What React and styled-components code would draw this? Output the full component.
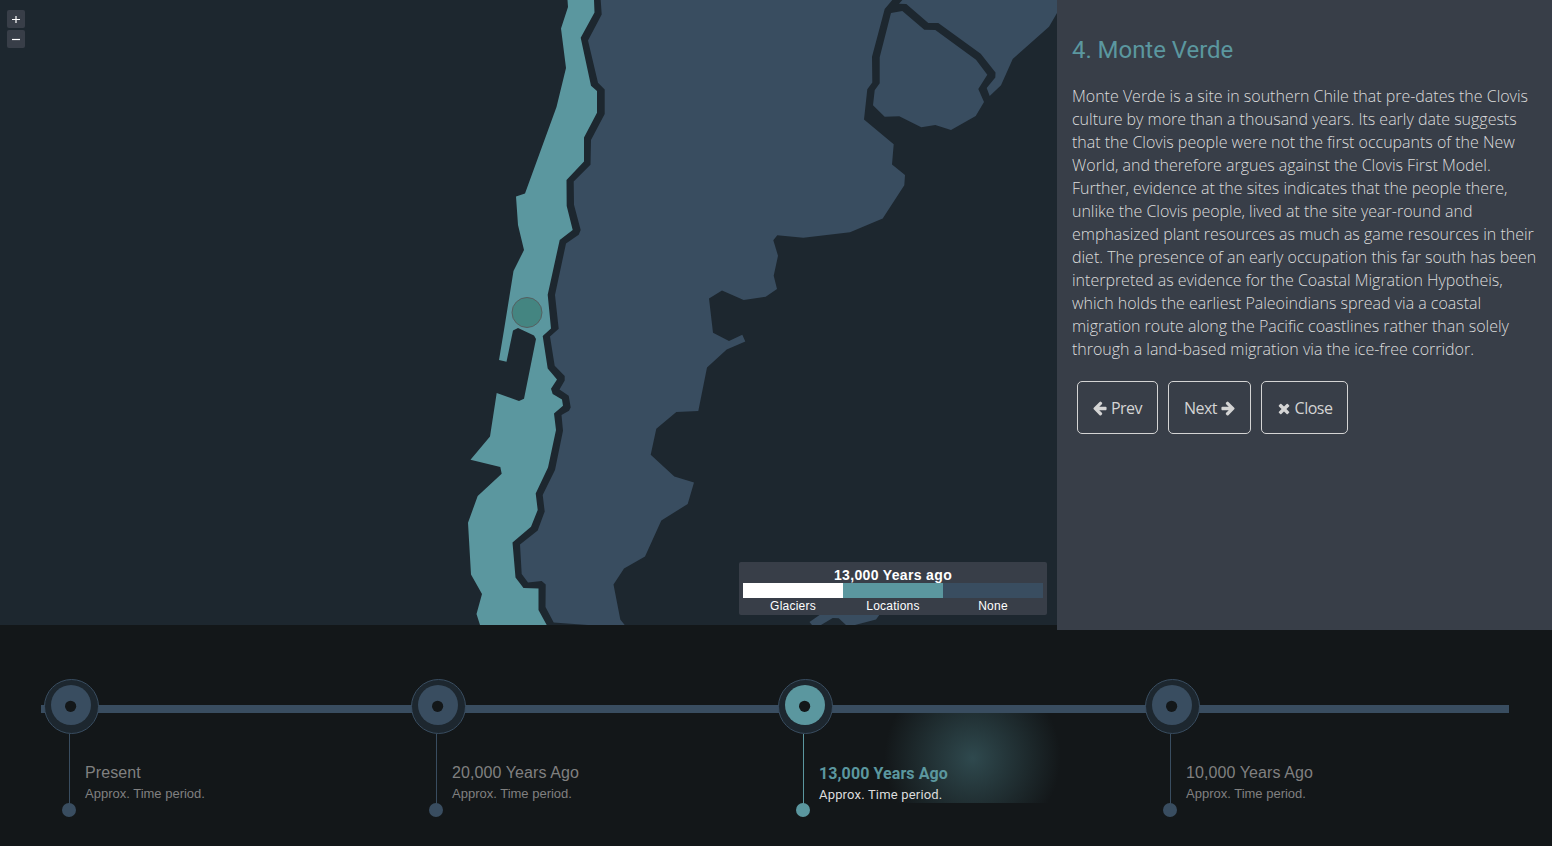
import React from "react";
import styled, { createGlobalStyle, css } from "styled-components";

const palette = {
  page: "#131719",
  sea: "#1d272f",
  panel: "#383e48",
  land: "#394d60",
  accent: "#5b979f",
};

const GlobalStyle = createGlobalStyle`
  * { box-sizing: border-box; }
  body { margin: 0; background: ${palette.page}; overflow: hidden; }
`;

const Page = styled.div`
  width: 1552px;
  height: 846px;
  background: ${palette.page};
`;

const Upper = styled.main`
  display: flex;
  align-items: flex-start;
  height: 630px;
`;

const MapArea = styled.section`
  position: relative;
  width: 1057px;
  height: 625px;
  background: ${palette.sea};
  overflow: hidden;
`;

const MapDrawing = styled.svg`
  display: block;
`;

const ZoomControls = styled.div`
  position: absolute;
  left: 7px;
  top: 10px;
  display: flex;
  flex-direction: column;
  gap: 2px;
`;

const ZoomButton = styled.button`
  display: grid;
  place-items: center;
  width: 18px;
  height: 18px;
  padding: 0;
  border: 0;
  border-radius: 2px;
  background: ${palette.panel};
  color: #fff;
`;

const Legend = styled.aside`
  position: absolute;
  right: 10px;
  bottom: 10px;
  width: 308px;
  height: 53px;
  padding: 5px 4px 0;
  border-radius: 2px;
  background: ${palette.panel};
  color: #fff;
  font-family: "Liberation Sans", sans-serif;
`;

const LegendTitle = styled.div`
  font-size: 14px;
  font-weight: 700;
  line-height: 16px;
  letter-spacing: 0.34px;
  text-align: center;
`;

const LegendKeys = styled.div`
  display: grid;
  grid-template-columns: repeat(3, 100px);
`;

const LegendKey = styled.div`
  border-top: 15px solid ${(p) => p.$color};
  font-size: 12px;
  line-height: 16px;
  letter-spacing: 0.22px;
  text-align: center;
`;

const InfoPanel = styled.section`
  width: 495px;
  height: 630px;
  padding: 35px 15px 0;
  background: ${palette.panel};
`;

const InfoTitle = styled.h1`
  margin: 0 0 20px;
  color: ${palette.accent};
  font: 400 24px/30px Roboto, sans-serif;
  letter-spacing: -0.05px;
`;

const InfoText = styled.p`
  margin: 0;
  color: #dcdcdc;
  font: 300 16px/23px "Open Sans", sans-serif;
  letter-spacing: -0.01px;
  white-space: nowrap;
`;

const Actions = styled.div`
  display: flex;
  gap: 10px;
  padding: 20px 5px 0;
`;

const ActionButton = styled.button`
  display: flex;
  align-items: center;
  justify-content: center;
  gap: 4px;
  width: ${(p) => p.$width}px;
  height: 53px;
  padding: 0;
  border: 1px solid #d4d4d4;
  border-radius: 5px;
  background: transparent;
  color: #d4d4d4;
  font: 400 16px/22px "Open Sans", sans-serif;
  letter-spacing: -0.5px;
`;

const ActionIcon = styled.svg`
  flex: none;
  margin-top: 2px;
  fill: currentColor;
  transform: ${(p) => (p.$flip ? "scaleX(-1)" : "none")};
`;

const Timeline = styled.section`
  position: relative;
  display: grid;
  grid-template-columns: repeat(4, 367px);
  width: 1468px;
  margin: 0 0 0 41px;
  padding-top: 49px;
  &::before {
    content: "";
    position: absolute;
    left: 0;
    top: 75px;
    width: 100%;
    height: 8px;
    background: ${palette.land};
  }
`;

const Period = styled.article`
  position: relative;
  padding-left: 3px;
  --mark: ${(p) => (p.$active ? palette.accent : palette.land)};
`;

const MarkerDrawing = styled.svg`
  display: block;
  position: relative;
`;

const Details = styled.div`
  position: relative;
  display: flex;
  height: 84px;
  padding-left: 18px;
`;

const Stem = styled.div`
  flex: none;
  display: flex;
  flex-direction: column;
  align-items: center;
  width: 14px;
  &::before {
    content: "";
    width: 1px;
    height: 70px;
    background: var(--mark);
  }
  &::after {
    content: "";
    width: 14px;
    height: 14px;
    margin-top: -1px;
    border-radius: 50%;
    background: var(--mark);
  }
`;

const Labels = styled.div`
  display: flex;
  flex-direction: column;
  padding: ${(p) => (p.$active ? "30px 0 0 9px" : "29px 0 0 9px")};
  color: #808080;
  white-space: nowrap;
  font-family: "Liberation Sans", sans-serif;
  ${(p) =>
    p.$active &&
    css`
      color: #dcdcdc;
      font-family: Roboto, sans-serif;
    `}
`;

const PeriodTitle = styled.h2`
  margin: 0;
  font-size: 16px;
  font-weight: ${(p) => (p.$active ? 700 : 400)};
  line-height: 20px;
  letter-spacing: 0.1px;
  color: ${(p) => (p.$active ? palette.accent : "inherit")};
`;

const PeriodNote = styled.p`
  margin: 0;
  font-size: 13px;
  line-height: 22px;
  letter-spacing: ${(p) => (p.$active ? 0.18 : 0)}px;
`;

const Glow = styled.div`
  position: absolute;
  left: 28px;
  top: 34px;
  width: 339px;
  height: 90px;
  background: radial-gradient(circle 88px at center, #2f494e, ${palette.page});
`;

const argentina =
  "600.7,0 601.7,14.5 588,40.5 598,82.7 604.7,89.5 604.7,114 591,140 590.5,164.7 573.7,181.5 574,204.7 580.7,230 578.7,234.7 566,243.5 555,295 558.7,328.7 550,336.5 554.7,365.7 564.7,376 564.7,380.5 559.5,389.5 568.7,395.7 570.7,407.5 569,410.7 561.5,415 563,430.7 555,470 542.7,495 544.7,511.5 537.7,530.5 520,544.5 521.7,574 528,582.5 541.7,581 545.7,584.5 545.5,607 553.7,622.5 587.7,625 624.7,625 620.3,619.5 613.5,584.5 624,568.5 645,556.6 661.3,520.5 687.7,504 694,482.5 674.3,476.5 650.7,454.7 656.3,428.7 676.3,412 698.3,411 707,367.5 726.7,349.5 745.3,341.5 742.3,334.7 729,341 713,332.7 709,298.5 722,290.5 743.7,300 765.7,296.7 777,289 773.7,275.7 778,255.7 773.3,240.3 777.3,235.3 803.3,237.7 850,232.3 882.7,218.5 904.3,185.3 905,175 892,164.5 893.7,144.3 864,119.5 867.3,89.3 872.3,82.5 872,56.7 884.7,9 892.3,0";
const chile =
  "567.5,0 568,7 561,28.5 566,68 556.5,107 525,193.5 516,196.5 518,225 524,250 513.5,271 504,330 499,360 506.5,361.7 513,330.5 518,328 534,335.5 536,339 524,398.7 519,401 496.7,393 490,436.5 470.5,459.7 500.3,467 501.7,473.7 477.7,496 468,522.7 471,574.5 482,594 476.5,614 480,625 546.7,625 538.5,610 538.5,588.5 523.5,588 515.5,577.5 512.5,542.5 531,526.7 537.7,510 535.7,493.5 548,467.5 556,430 554,413.5 563,405.7 562,399.5 552.7,394 551,388.7 557,379.5 547.7,368.5 542.7,336 551,328.5 547.7,294.7 559.7,240 572.7,230 566.7,206 566.5,180 584,161.5 584,137.5 597,112.7 597,91 591,85.7 580.7,37.7 594.5,12.5 594,0";
const uruguay =
  "891,13 902.3,11 924.3,29.7 935.3,30 976,59.7 987.3,74.7 978.3,89 984,102 975.7,116 951,130 935.3,125 921.3,127.3 899.3,116.3 884.7,116.7 873,105.3 874.7,90.3 879.7,83.3 879.7,57.3";
const brazil =
  "902.3,0 899,3.7 906.3,4 928.3,23 938.3,23 980.7,53.7 995.5,72.5 995.3,77.5 986.7,88 989.7,96 1001,85.3 1012.7,59 1049,26.7 1057,13 1057,0";
const falklands =
  "809.5,622 821,614 880,614 876,619.5 855,625 846,625 838.7,618.3 832.7,618 821,625 812,625";

const copy = [
  "Monte Verde is a site in southern Chile that pre-dates the Clovis",
  "culture by more than a thousand years. Its early date suggests",
  "that the Clovis people were not the first occupants of the New",
  "World, and therefore argues against the Clovis First Model.",
  "Further, evidence at the sites indicates that the people there,",
  "unlike the Clovis people, lived at the site year-round and",
  "emphasized plant resources as much as game resources in their",
  "diet. The presence of an early occupation this far south has been",
  "interpreted as evidence for the Coastal Migration Hypotheis,",
  "which holds the earliest Paleoindians spread via a coastal",
  "migration route along the Pacific coastlines rather than solely",
  "through a land-based migration via the ice-free corridor.",
];

const periods = [
  { title: "Present" },
  { title: "20,000 Years Ago" },
  { title: "13,000 Years Ago", active: true },
  { title: "10,000 Years Ago" },
];

function Arrow({ flip }) {
  return (
    <ActionIcon $flip={flip} width="14" height="15" viewBox="16 120 1568 1680">
      <path d="M1536 896v128q0 53-32.5 90.5t-84.5 37.5h-704l293 294q38 36 38 90t-38 90l-75 76q-37 37-90 37-52 0-91-37l-651-652q-37-37-37-90 0-52 37-91l651-650q38-38 91-38 52 0 90 38l75 74q38 38 38 91t-38 91l-293 293h704q52 0 84.5 37.5t32.5 90.5z" />
    </ActionIcon>
  );
}

function Cross() {
  return (
    <ActionIcon width="14" height="12" viewBox="112 288 1568 1344">
      <path d="M1490 1322q0 40-28 68l-136 136q-28 28-68 28t-68-28l-294-294-294 294q-28 28-68 28t-68-28l-136-136q-28-28-28-68t28-68l294-294-294-294q-28-28-28-68t28-68l136-136q28-28 68-28t68 28l294 294 294-294q28-28 68-28t68 28l136 136q28 28 28 68t-28 68l-294 294 294 294q28 28 28 68z" />
    </ActionIcon>
  );
}

export default function App() {
  return (
    <Page>
      <GlobalStyle />
      <Upper>
        <MapArea>
          <MapDrawing width="1057" height="625" viewBox="0 0 1057 625">
            {[argentina, uruguay, brazil, falklands].map((points) => (
              <polygon key={points} points={points} fill={palette.land} />
            ))}
            <polygon points={chile} fill={palette.accent} />
            <circle cx="527" cy="312.5" r="15" fill="#448581" stroke="#555f60" />
          </MapDrawing>
          <ZoomControls>
            <ZoomButton aria-label="Zoom in">
              <svg width="10" height="10" viewBox="0 0 10 10">
                <path d="M1 5.5H9M5 2V9" stroke="currentColor" strokeWidth="1.2" />
              </svg>
            </ZoomButton>
            <ZoomButton aria-label="Zoom out">
              <svg width="10" height="10" viewBox="0 0 10 10">
                <path d="M1 5.5H9" stroke="currentColor" strokeWidth="1.2" />
              </svg>
            </ZoomButton>
          </ZoomControls>
          <Legend>
            <LegendTitle>13,000 Years ago</LegendTitle>
            <LegendKeys>
              <LegendKey $color="#fff">Glaciers</LegendKey>
              <LegendKey $color={palette.accent}>Locations</LegendKey>
              <LegendKey $color={palette.land}>None</LegendKey>
            </LegendKeys>
          </Legend>
        </MapArea>
        <InfoPanel>
          <InfoTitle>4. Monte Verde</InfoTitle>
          <InfoText>
            {copy.map((line) => (
              <React.Fragment key={line}>
                {line}
                <br />
              </React.Fragment>
            ))}
          </InfoText>
          <Actions>
            <ActionButton $width={81}>
              <Arrow /> Prev
            </ActionButton>
            <ActionButton $width={83}>
              Next <Arrow flip />
            </ActionButton>
            <ActionButton $width={87}>
              <Cross /> Close
            </ActionButton>
          </Actions>
        </InfoPanel>
      </Upper>
      <Timeline>
        {periods.map(({ title, active }) => (
          <Period key={title} $active={active}>
            {active && <Glow />}
            <MarkerDrawing width="55" height="55" viewBox="0 0 55 55">
              <circle cx="27.5" cy="27.5" r="27" fill={palette.sea} stroke={palette.land} />
              <circle cx="27" cy="26" r="20" fill="var(--mark)" />
              <circle cx="26.6" cy="27.3" r="5.6" fill={palette.page} />
            </MarkerDrawing>
            <Details>
              <Stem />
              <Labels $active={active}>
                <PeriodTitle $active={active}>{title}</PeriodTitle>
                <PeriodNote $active={active}>Approx. Time period.</PeriodNote>
              </Labels>
            </Details>
          </Period>
        ))}
      </Timeline>
    </Page>
  );
}
